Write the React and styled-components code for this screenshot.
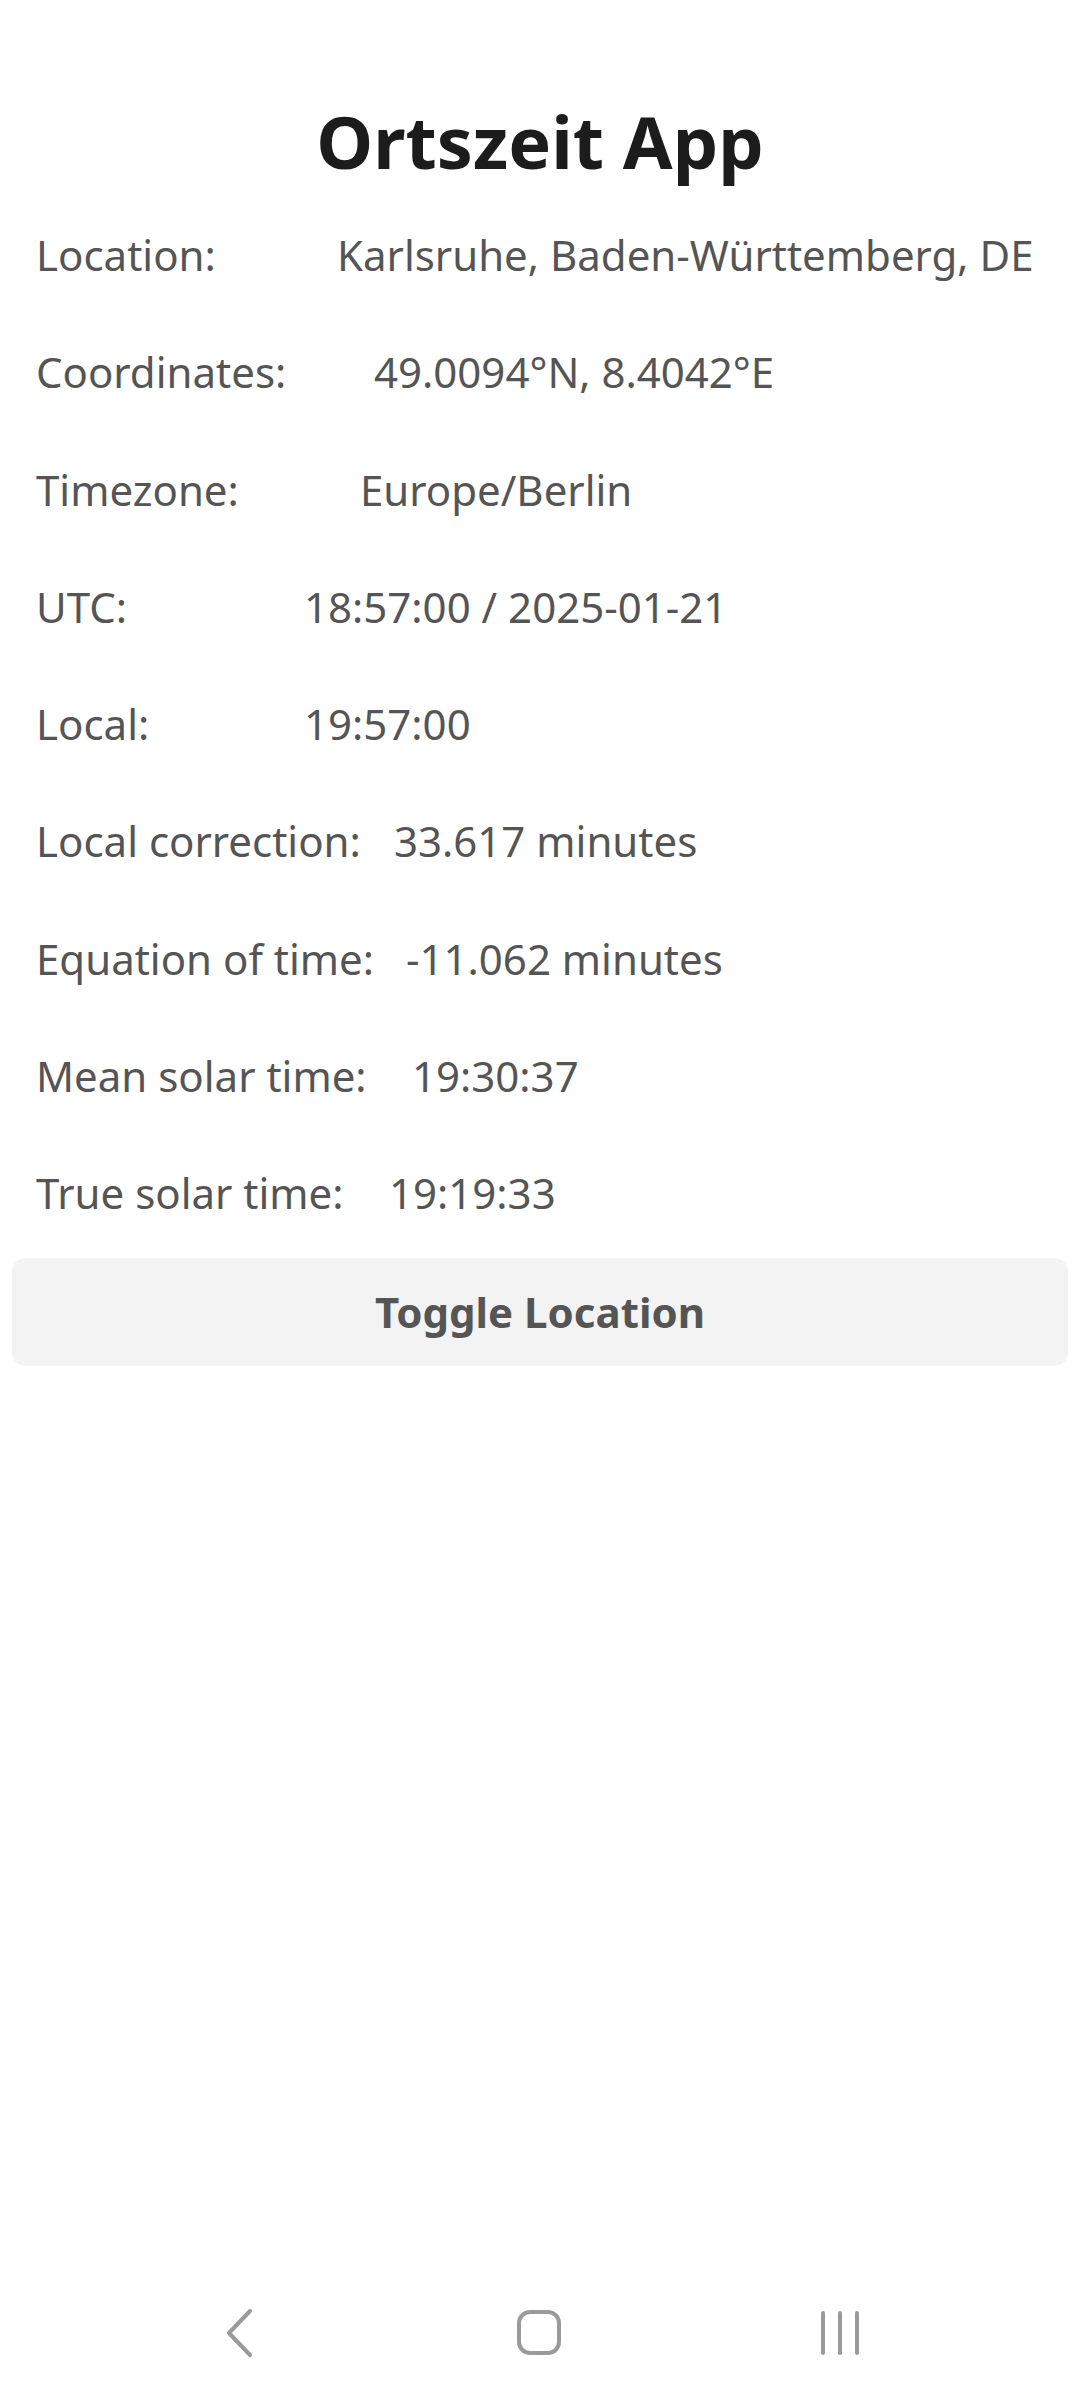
import styled, { createGlobalStyle } from "styled-components";

const GlobalStyle = createGlobalStyle`
    html, body {
        margin: 0;
        padding: 0;
        background: #ffffff;
    }
    body {
        font-family: "Noto Sans", "Open Sans", sans-serif;
    }
`;

const rows = [
    { label: "Location:", value: "Karlsruhe, Baden-Württemberg, DE", at: 337 },
    { label: "Coordinates:", value: "49.0094°N, 8.4042°E", at: 374 },
    { label: "Timezone:", value: "Europe/Berlin", at: 360 },
    { label: "UTC:", value: "18:57:00 / 2025-01-21", at: 304 },
    { label: "Local:", value: "19:57:00", at: 304 },
    { label: "Local correction:", value: "33.617 minutes", at: 394 },
    { label: "Equation of time:", value: "-11.062 minutes", at: 406 },
    { label: "Mean solar time:", value: "19:30:37", at: 412 },
    { label: "True solar time:", value: "19:19:33", at: 389 },
];

const App = () => {
    return (
        <>
            <GlobalStyle />
            <Screen>
                <Content>
                    <Title>Ortszeit App</Title>
                    <InfoList>
                        {rows.map((row) => (
                            <InfoRow key={row.label} $valueAt={row.at}>
                                <Label>{row.label}</Label>
                                <Value>{row.value}</Value>
                            </InfoRow>
                        ))}
                    </InfoList>
                    <ToggleButton type="button">Toggle Location</ToggleButton>
                </Content>
                <NavBar>
                    <NavIcon>
                        <svg width="30" height="50" viewBox="0 0 30 50" fill="none">
                            <path d="M25 3 L4 25 L25 47" stroke="#9a9a9a" strokeWidth="4" strokeLinecap="round" strokeLinejoin="round" />
                        </svg>
                    </NavIcon>
                    <NavIcon>
                        <svg width="50" height="50" viewBox="0 0 50 50" fill="none">
                            <rect x="4" y="4" width="40" height="41" rx="11" stroke="#9a9a9a" strokeWidth="4" />
                        </svg>
                    </NavIcon>
                    <NavIcon>
                        <svg width="44" height="50" viewBox="0 0 44 50" fill="none">
                            <path d="M5 5 V45 M22 5 V45 M39 5 V45" stroke="#9a9a9a" strokeWidth="4" strokeLinecap="round" />
                        </svg>
                    </NavIcon>
                </NavBar>
            </Screen>
        </>
    );
};

export default App;

const Screen = styled.div`
    width: 1080px;
    height: 2400px;
    display: flex;
    flex-direction: column;
    justify-content: space-between;
    background: #ffffff;
`;

const Content = styled.div`
    padding: 92px 12px 0;
`;

const Title = styled.h1`
    margin: 0;
    text-align: center;
    font-size: 72px;
    font-weight: 700;
    line-height: 98px;
    color: #1c1c1c;
`;

const InfoList = styled.div`
    margin-top: 6px;
    padding-left: 24px;
`;

const InfoRow = styled.div`
    display: grid;
    grid-template-columns: ${(p) => p.$valueAt - 36}px 1fr;
    padding: 30px 0;
    height: 57.3px;
    font-size: 42px;
    line-height: 57.3px;
    color: #555555;
    white-space: nowrap;
`;

const Label = styled.span``;

const Value = styled.span``;

const ToggleButton = styled.button`
    display: block;
    width: 100%;
    height: 108px;
    margin-top: 6px;
    border: none;
    border-radius: 14px;
    background: #f3f3f3;
    font-family: "Noto Sans", "Open Sans", sans-serif;
    font-size: 42px;
    font-weight: 700;
    color: #555555;
`;

const NavBar = styled.div`
    height: 134px;
    display: flex;
    justify-content: center;
    align-items: flex-start;
    padding-top: 42px;
    box-sizing: border-box;
`;

const NavIcon = styled.div`
    width: 300px;
    display: flex;
    justify-content: center;
`;
